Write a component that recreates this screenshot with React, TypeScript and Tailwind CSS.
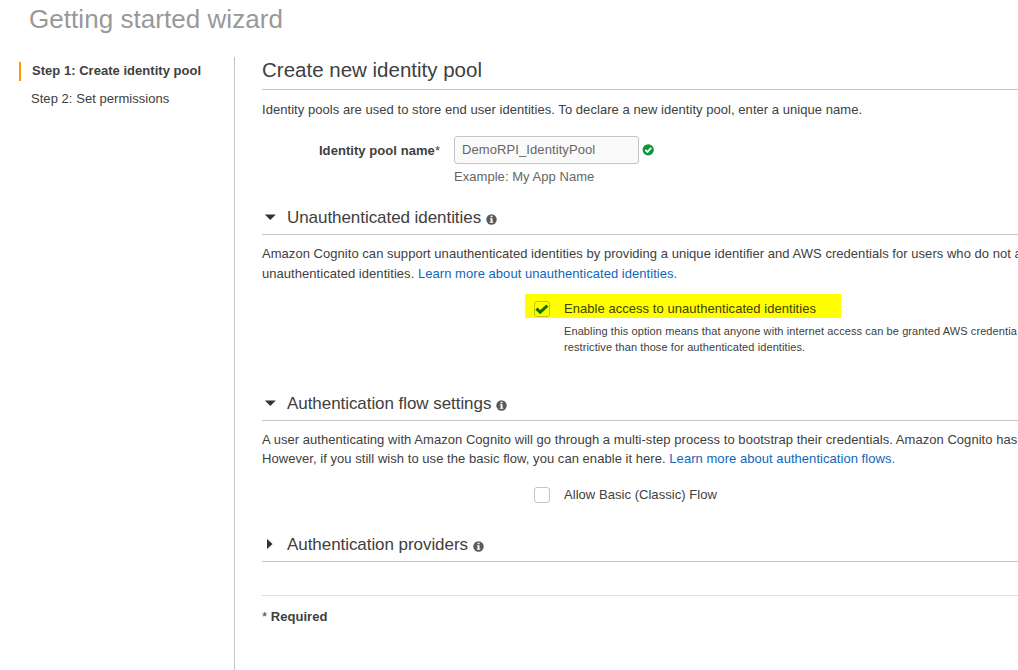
import type { ReactNode } from "react";

function InfoIcon() {
  return (
    <svg className="ml-[5px] mt-[2px] h-[11px] w-[11px] shrink-0" viewBox="0 0 11 11">
      <circle cx="5.5" cy="5.5" r="5.2" fill="#5a5a5a" />
      <path d="M4.6 1.7h1.9v1.5H4.6zM3.9 4.3h2.6v3.5h.8v1H3.8v-1h.8V5.3h-.7z" fill="#fff" />
    </svg>
  );
}

function Section({ title, open }: { title: string; open?: boolean }) {
  return (
    <div className="flex h-[35px] items-center border-b border-[#c4c4c4] pt-[2px]">
      <svg className="-mt-[2px] ml-[2px] mr-[11px] h-[12px] w-[12px] shrink-0" viewBox="0 0 12 12">
        <path d={open ? "M.8 3.5h11L6.3 9z" : "M3 1v10l5.6-5z"} fill="#333" />
      </svg>
      <h2 className="text-[17px] leading-[20px] tracking-[-0.06px]">{title}</h2>
      <InfoIcon />
    </div>
  );
}

function Line({ children, className = "" }: { children: ReactNode; className?: string }) {
  return <p className={`whitespace-nowrap ${className}`}>{children}</p>;
}

export default function App() {
  return (
    <div className="h-[670px] w-[1018px] overflow-hidden bg-white font-['Liberation_Sans',Arial,sans-serif] text-[13px] tracking-[0.046px] text-[#404040]">
      <h1 className="h-[57px] pl-[29px] text-[26px] leading-[38px] text-[#999]">Getting started wizard</h1>
      <div className="flex h-[613px]">
        <nav className="w-[234px] shrink-0 pl-[19px] pt-[5px]">
          <div className="flex h-[19px] items-center border-l-2 border-[#f90] pb-[2px] pl-[11px] font-bold leading-[17px] tracking-[0.03px]">Step 1: Create identity pool</div>
          <div className="mt-[8px] flex h-[20px] items-center pl-[12px]">Step 2: Set permissions</div>
        </nav>
        <main className="min-w-0 flex-1 overflow-hidden border-l border-[#c4c4c4] pl-[27px]">
          <h2 className="h-[33px] border-b border-[#c4c4c4] text-[20.5px] leading-[26px] tracking-normal">Create new identity pool</h2>
          <Line className="mt-[10px] h-[20px] leading-[20px]">Identity pools are used to store end user identities. To declare a new identity pool, enter a unique name.</Line>
          <div className="mt-[16px] flex h-[28px] items-center">
            <label className="w-[178px] pt-px text-right font-bold tracking-[0.06px]">Identity pool name<span className="font-normal">*</span></label>
            <div className="ml-[14px] flex h-[28px] w-[185px] items-center rounded-[3px] border border-[#c4c4c4] bg-[#fafafa] pb-px pl-[7px] tracking-[0.09px] text-[#666]">DemoRPI_IdentityPool</div>
            <svg className="ml-[3px] h-[12px] w-[12px]" viewBox="0 0 12 12">
              <circle cx="6.2" cy="5.8" r="5.6" fill="#0d9637" />
              <path d="M3.2 5.8l2.2 2.1L9.2 3.8" fill="none" stroke="#fff" strokeWidth="1.8" />
            </svg>
          </div>
          <Line className="ml-[192px] mt-[3px] h-[20px] leading-[20px] text-[#666]">Example: My App Name</Line>
          <div className="h-[13px]" />
          <Section title="Unauthenticated identities" open />
          <Line className="mt-[9px] h-[20px] leading-[20px] tracking-[0.04px]">Amazon Cognito can support unauthenticated identities by providing a unique identifier and AWS credentials for users who do not a</Line>
          <Line className="h-[20px] leading-[20px]">unauthenticated identities. <a className="text-[#1166bb]">Learn more about unauthenticated identities.</a></Line>
          <div className="ml-[263px] mt-[10px] flex h-[24px] w-[316px] items-center bg-[#ff0] pt-[5px] text-[#404000]">
            <div className="ml-[9px] h-[16px] w-[16px] shrink-0 rounded-[3px] border border-[#c4c400]">
              <svg className="h-[14px] w-[14px]" viewBox="0 0 14 14"><path d="M1.4 6.6l3.8 3.6L12.4 3.7" fill="none" stroke="#146e00" strokeWidth="3" /></svg>
            </div>
            <span className="ml-[14px] whitespace-nowrap">Enable access to unauthenticated identities</span>
          </div>
          <div className="ml-[302px] mt-[5px] text-[11px] leading-[16px] tracking-[0.1px]">
            <Line>Enabling this option means that anyone with internet access can be granted AWS credentia</Line>
            <Line>restrictive than those for authenticated identities.</Line>
          </div>
          <div className="h-[31px]" />
          <Section title="Authentication flow settings" open />
          <Line className="mt-[9px] h-[19px] leading-[19px]">A user authenticating with Amazon Cognito will go through a multi-step process to bootstrap their credentials. Amazon Cognito has</Line>
          <Line className="h-[19px] leading-[19px]">However, if you still wish to use the basic flow, you can enable it here. <a className="text-[#1166bb]">Learn more about authentication flows.</a></Line>
          <div className="mt-[17px] flex h-[20px] items-center pl-[272px]">
            <div className="h-[16px] w-[16px] rounded-[3px] border border-[#c4c4c4]" />
            <span className="ml-[14px]">Allow Basic (Classic) Flow</span>
          </div>
          <div className="h-[22px]" />
          <Section title="Authentication providers" />
          <div className="h-[34px] border-b border-[#ddd]" />
          <p className="mt-[11px] leading-[20px]">* <b>Required</b></p>
        </main>
      </div>
    </div>
  );
}
